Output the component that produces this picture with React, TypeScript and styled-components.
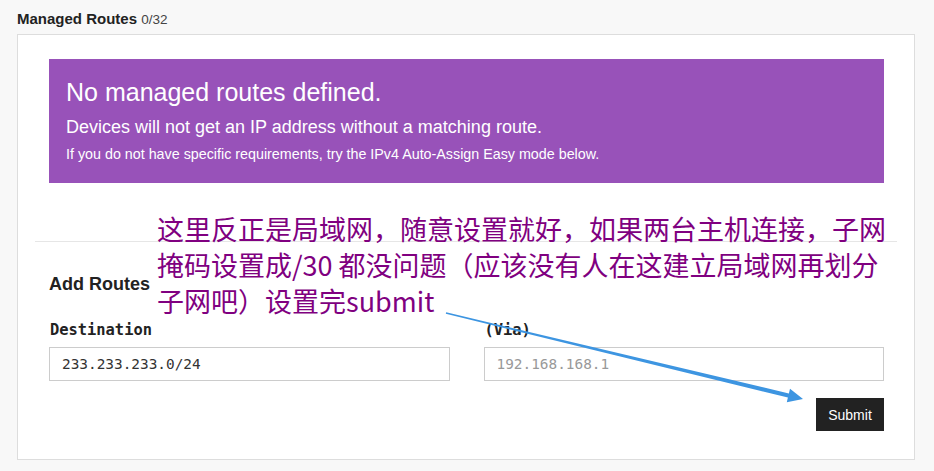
import React from "react";
import styled, { createGlobalStyle } from "styled-components";

const Global = createGlobalStyle`
  html, body { margin: 0; padding: 0; background: #f8f8f8; }
  * { box-sizing: border-box; }
`;

const Page = styled.div`
  position: relative;
  width: 934px;
  min-height: 471px;
  padding: 10px 19px 11px 17px;
  background: #f8f8f8;
  font-family: "Liberation Sans", Arial, sans-serif;
  color: #333;
`;

const Heading = styled.div`
  font-size: 15px;
  line-height: 18px;
  font-weight: bold;
  color: #222;
  margin-bottom: 5px;
`;

const Count = styled.span`
  font-weight: normal;
  font-size: 13.5px;
  color: #444;
`;

const Card = styled.div`
  width: 898px;
  background: #fff;
  border: 1px solid #ddd;
  padding: 24px 30px 28px 31px;
`;

const Notice = styled.div`
  background: #9852b9;
  color: #fff;
  padding: 18px 17px 19px;
`;

const NoticeTitle = styled.div`
  font-size: 25px;
  line-height: 30px;
`;

const NoticeText = styled.div<{ $small?: boolean }>`
  font-size: ${(p) => (p.$small ? "14.3px" : "18px")};
  line-height: ${(p) => (p.$small ? "20px" : "24px")};
  margin-top: ${(p) => (p.$small ? "5px" : "8px")};
`;

const Rule = styled.div`
  height: 1px;
  background: #e6e6e6;
  margin: 58px -13px 0 -14px;
`;

const SectionTitle = styled.div`
  font-size: 18px;
  line-height: 22px;
  font-weight: bold;
  color: #222;
  margin-top: 31px;
`;

const Fields = styled.div`
  display: grid;
  grid-template-columns: 1fr 1fr;
  column-gap: 34px;
  margin-top: 25px;
`;

const Field = styled.div`
  display: flex;
  flex-direction: column;
`;

const Label = styled.div`
  font-family: "DejaVu Sans Mono", monospace;
  font-weight: bold;
  font-size: 15.4px;
  line-height: 20px;
  color: #222;
  margin-bottom: 7px;
  padding-left: 1px;
`;

const Input = styled.input`
  height: 34px;
  width: 100%;
  border: 1px solid #ccc;
  padding: 0 12px;
  font-family: "DejaVu Sans Mono", monospace;
  font-size: 14.4px;
  color: #333;
  background: #fff;
  outline: none;
  &::placeholder { color: #999; }
`;

const Actions = styled.div`
  display: flex;
  justify-content: flex-end;
  margin-top: 17px;
`;

const Button = styled.button`
  width: 68px;
  height: 33px;
  border: none;
  background: #222;
  color: #fff;
  font-family: "Liberation Sans", Arial, sans-serif;
  font-size: 14px;
  padding: 0;
`;

const Annotation = styled.div`
  position: absolute;
  left: 157px;
  top: 211px;
  font-family: "Noto Sans CJK SC", "Noto Sans", sans-serif;
  font-size: 27px;
  line-height: 36px;
  color: #800080;
  white-space: nowrap;
  pointer-events: none;
`;

const Overlay = styled.svg`
  position: absolute;
  left: 0;
  top: 0;
  pointer-events: none;
`;

export default function App() {
  return (
    <>
      <Global />
      <Page>
        <Heading>
          Managed Routes <Count>0/32</Count>
        </Heading>
        <Card>
          <Notice>
            <NoticeTitle>No managed routes defined.</NoticeTitle>
            <NoticeText>Devices will not get an IP address without a matching route.</NoticeText>
            <NoticeText $small>
              If you do not have specific requirements, try the IPv4 Auto-Assign Easy mode below.
            </NoticeText>
          </Notice>
          <Rule />
          <SectionTitle>Add Routes</SectionTitle>
          <Fields>
            <Field>
              <Label>Destination</Label>
              <Input defaultValue="233.233.233.0/24" />
            </Field>
            <Field>
              <Label>(Via)</Label>
              <Input placeholder="192.168.168.1" />
            </Field>
          </Fields>
          <Actions>
            <Button>Submit</Button>
          </Actions>
        </Card>
        <Annotation>
          这里反正是局域网，随意设置就好，如果两台主机连接，子网
          <br />
          掩码设置成/30 都没问题（应该没有人在这建立局域网再划分
          <br />
          子网吧）设置完submit
        </Annotation>
        <Overlay width="934" height="471" viewBox="0 0 934 471">
          <polygon
            points="446.2,312.3 445.8,313.7 787.9,397.6 786.8,402.3 803,399 790,388.7 788.9,393.4"
            fill="#3d95e1"
          />
        </Overlay>
      </Page>
    </>
  );
}
